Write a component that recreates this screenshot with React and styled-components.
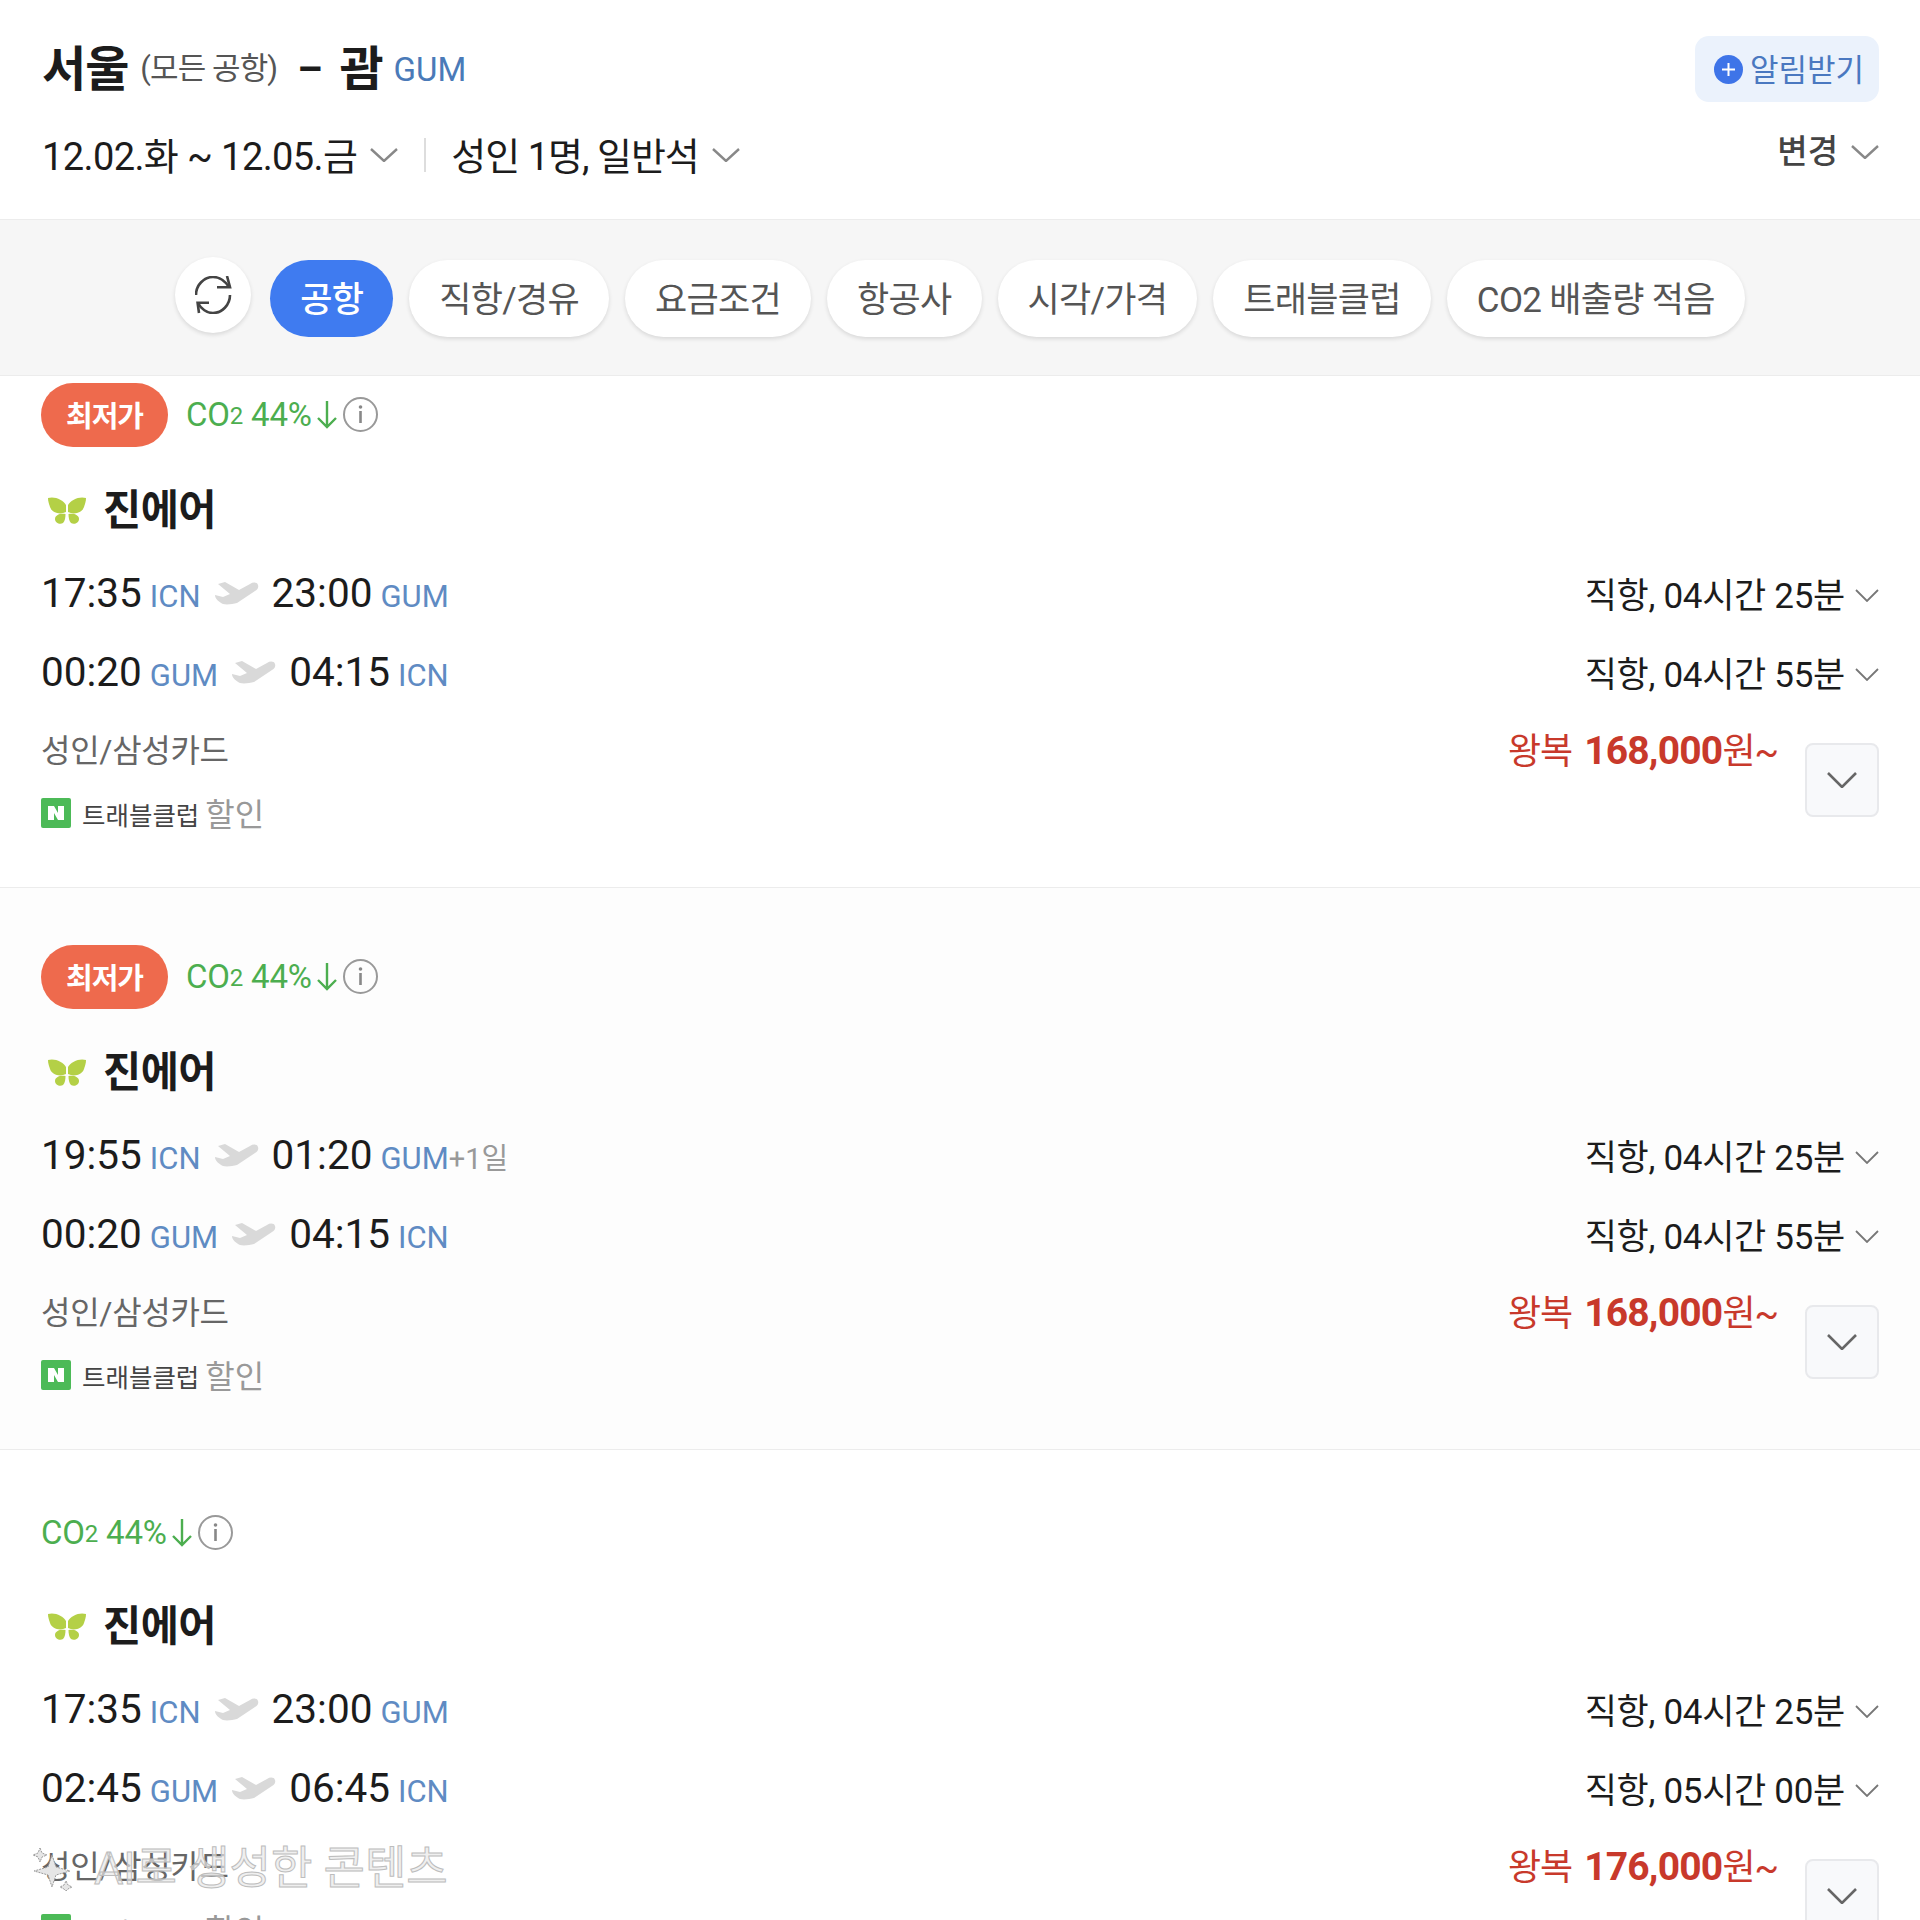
import React from "react";
import styled, { createGlobalStyle } from "styled-components";

const GlobalStyle = createGlobalStyle`
  html, body {
    margin: 0;
    padding: 0;
    background: #fff;
  }
  * {
    box-sizing: border-box;
  }
`;

const Page = styled.div`
  position: relative;
  width: 1920px;
  height: 1920px;
  overflow: hidden;
  background: #fff;
  color: #1c1c1c;
  font-family: Roboto, "Noto Sans CJK KR", sans-serif;
`;

const Header = styled.header`
  height: 220px;
  padding: 36px 41px 0 42px;
  border-bottom: 1px solid #ececec;
  display: flex;
  justify-content: space-between;
`;

const HeaderLeft = styled.div`
  display: flex;
  flex-direction: column;
`;

const RouteLine = styled.div`
  display: flex;
  align-items: center;
  height: 66px;
  padding-top: 2px;
`;

const City = styled.strong`
  font-size: 48px;
  font-weight: 700;
  line-height: 62px;
  letter-spacing: -1px;
`;

const CityNote = styled.span`
  font-size: 31px;
  line-height: 62px;
  color: #555;
  margin-left: 12px;
  padding-bottom: 2px;
  letter-spacing: -0.9px;
`;

const Dash = styled.span`
  font-size: 40px;
  font-weight: 700;
  line-height: 62px;
  margin: 0 17px 0 20px;
`;

const CityCode = styled.span`
  font-size: 33px;
  color: #4a7ab8;
  margin-left: 11px;
  padding-bottom: 2px;
`;

const SummaryLine = styled.div`
  display: flex;
  align-items: center;
  margin-top: 33px;
  height: 40px;
  font-size: 38px;
`;

const SummaryText = styled.span`
  margin-right: 13px;
  padding-bottom: 4px;
  letter-spacing: ${(p) => p.$spacing || -0.6}px;
`;

const Divider = styled.span`
  width: 2px;
  height: 34px;
  margin: 0 25px 0 26px;
  background: #ddd;
`;

const HeaderRight = styled.div`
  display: flex;
  flex-direction: column;
  align-items: flex-end;
`;

const AlertButton = styled.button`
  width: 184px;
  height: 66px;
  padding: 0 0 0 19px;
  display: flex;
  align-items: center;
  gap: 7px;
  border: 0;
  border-radius: 14px;
  background: #ebf2fc;
  color: #4a78c0;
  font: 400 31px Roboto, "Noto Sans CJK KR", sans-serif;
  span {
    padding-bottom: 4px;
  }
`;

const ChangeLink = styled.div`
  display: flex;
  align-items: center;
  gap: 13px;
  margin-top: 30px;
  font-size: 33px;
  font-weight: 500;
  color: #444;
  line-height: 40px;
`;

const FilterBar = styled.nav`
  height: 156px;
  padding-top: 40px;
  display: flex;
  justify-content: center;
  gap: 16px;
  background: #f6f6f6;
  border-bottom: 1px solid #ececec;
`;

const RefreshButton = styled.button`
  width: 76px;
  height: 76px;
  margin: -3px 3px 0 0;
  padding: 0;
  display: flex;
  align-items: center;
  justify-content: center;
  border: 0;
  border-radius: 50%;
  background: #fff;
  box-shadow: 0 2px 4px rgba(0, 0, 0, 0.12);
`;

const Pill = styled.button`
  height: 77px;
  padding: 0 30px 4px;
  border: 0;
  border-radius: 39px;
  background: ${(p) => (p.$active ? "#3f7bf0" : "#fff")};
  color: ${(p) => (p.$active ? "#fff" : "#555")};
  font: ${(p) => (p.$active ? 500 : 400)} 35px Roboto, "Noto Sans CJK KR", sans-serif;
  letter-spacing: -0.7px;
  box-shadow: ${(p) => (p.$active ? "none" : "0 2px 4px rgba(0, 0, 0, 0.12)")};
  white-space: nowrap;
`;

const Card = styled.article`
  height: ${(p) => p.$height}px;
  padding: ${(p) => p.$top}px 41px 0;
  background: ${(p) => p.$bg || "#fff"};
  border-bottom: 1px solid #ececec;
`;

const TagRow = styled.div`
  display: flex;
  align-items: center;
  height: ${(p) => p.$height}px;
`;

const CheapBadge = styled.span`
  width: 127px;
  height: 64px;
  margin-right: 18px;
  padding-bottom: 2px;
  display: flex;
  align-items: center;
  justify-content: center;
  border-radius: 32px;
  background: #ee6a4d;
  color: #fff;
  font-size: 29px;
  font-weight: 700;
  letter-spacing: -1px;
`;

const Co2 = styled.span`
  display: flex;
  align-items: center;
  padding-bottom: 2px;
  font-size: 33px;
  color: #4cae4f;
  letter-spacing: -0.2px;
  sub {
    font-size: 24px;
    line-height: 1;
    vertical-align: baseline;
    position: relative;
    top: 2px;
  }
`;

const ArrowIcon = styled.svg`
  width: 22px;
  height: 32px;
  margin-left: 4px;
`;

const InfoIcon = styled.svg`
  width: 37px;
  height: 37px;
  margin-left: 4px;
`;

const AirlineRow = styled.div`
  display: flex;
  align-items: center;
  gap: 17px;
  height: 60px;
  margin: 30px 0 16px;
  padding-left: 7px;
`;

const ButterflyIcon = styled.svg`
  width: 38px;
  height: 30px;
  margin-top: 8px;
`;

const AirlineName = styled.strong`
  font-size: 41.5px;
  font-weight: 700;
  letter-spacing: -0.5px;
`;

const ItineraryRow = styled.div`
  display: flex;
  justify-content: space-between;
  align-items: center;
  height: 79px;
`;

const Times = styled.div`
  display: flex;
  align-items: baseline;
`;

const Time = styled.span`
  font-size: 40.5px;
`;

const Code = styled.span`
  font-size: 31px;
  color: #5f8bc3;
  margin-left: 8px;
`;

const PlusDay = styled.span`
  font-size: 29px;
  color: #999;
`;

const PlaneIcon = styled.svg`
  width: 46px;
  height: 24px;
  margin: 0 13px 0 12px;
  align-self: center;
`;

const Duration = styled.div`
  display: flex;
  align-items: center;
  gap: 10px;
  font-size: 35px;
  letter-spacing: -0.3px;
  svg {
    margin-top: 6px;
  }
`;

const FareRow = styled.div`
  display: flex;
  justify-content: space-between;
  margin-top: 17px;
`;

const FareLeft = styled.div`
  display: flex;
  flex-direction: column;
`;

const FareType = styled.div`
  font-size: 32px;
  line-height: 40px;
  color: #666;
  margin-top: 3px;
  letter-spacing: -0.3px;
`;

const ClubLine = styled.div`
  display: flex;
  align-items: center;
  margin-top: 24px;
  height: 36px;
`;

const NaverIcon = styled.svg`
  width: 30px;
  height: 30px;
  margin-right: 11px;
`;

const ClubName = styled.span`
  font-size: 25.5px;
  color: #444;
  margin-right: 6px;
`;

const ClubNote = styled.span`
  font-size: 32px;
  color: #999;
  padding-bottom: 3px;
`;

const FareRight = styled.div`
  display: flex;
  align-items: flex-start;
  gap: 27px;
`;

const Price = styled.div`
  font-size: 36px;
  line-height: 44px;
  margin-top: 1px;
  color: #c8392b;
  letter-spacing: -1px;
  b {
    font-size: 39px;
    font-weight: 700;
    margin-left: 12px;
    letter-spacing: -0.8px;
  }
`;

const ExpandButton = styled.button`
  width: 74px;
  height: 74px;
  margin-top: 15px;
  padding: 0;
  display: flex;
  align-items: center;
  justify-content: center;
  border: 2px solid #e8e9ec;
  border-radius: 8px;
  background: #f8f9fb;
`;

const Watermark = styled.div`
  position: absolute;
  left: 32px;
  top: 1845px;
  display: flex;
  align-items: center;
  gap: 20px;
  font-size: 45px;
  line-height: 48px;
  color: rgba(232, 232, 232, 0.7);
  -webkit-text-stroke: 1px #bdbdbd;
`;

const Chevron = ({ w = 28, h = 14, color = "#888", sw = 2.4 }) => (
  <svg width={w} height={h} viewBox={`0 0 ${w} ${h}`} fill="none">
    <path
      d={`M1 1 L${w / 2} ${h - 1} L${w - 1} 1`}
      stroke={color}
      strokeWidth={sw}
    />
  </svg>
);

const Butterfly = () => (
  <ButterflyIcon viewBox="0 0 38 30" fill="#b4d046">
    <path d="M0 2 C7 0 15 4 18 9 L18 16 C12 19 4 17 2 11 C1 8 0 5 0 2 Z" />
    <path d="M38 2 C31 0 23 4 20 9 L20 16 C26 19 34 17 36 11 C37 8 38 5 38 2 Z" />
    <path d="M17.5 18 C12 17 7 19 7 23 C7 27 12 29 15 27 C17 25 17.5 21 17.5 18 Z" />
    <path d="M20.5 18 C26 17 31 19 31 23 C31 27 26 29 23 27 C21 25 20.5 21 20.5 18 Z" />
  </ButterflyIcon>
);

const Plane = () => (
  <PlaneIcon viewBox="0 0 46 24">
    <path
      d="M45 4 C44 1 40 1 37 3 L26 9 L12 1 L5 3 L17 13 L10 16 L2 14 C2 18 6 21 10 23 C14 24 20 23 24 22 L42 10 C44 9 46 7 45 4 Z"
      fill="#d9d9d9"
    />
  </PlaneIcon>
);

const Info = () => (
  <InfoIcon viewBox="0 0 37 37" fill="none">
    <circle cx="18.5" cy="18.5" r="16.5" stroke="#999" strokeWidth="2" />
    <circle cx="18.5" cy="11" r="1.8" fill="#888" />
    <rect x="17.2" y="15" width="2.6" height="12" fill="#888" />
  </InfoIcon>
);

const DownArrow = () => (
  <ArrowIcon viewBox="0 0 22 32" fill="none">
    <path d="M11 3 V29 M2 20 L11 29 L20 20" stroke="#4cae4f" strokeWidth="2.4" />
  </ArrowIcon>
);

const Naver = () => (
  <NaverIcon viewBox="0 0 30 30">
    <rect width="30" height="30" rx="2" fill="#4cba57" />
    <path d="M7 8 H13 L17 15 V8 H23 V22 H17 L13 15 V22 H7 Z" fill="#fff" />
  </NaverIcon>
);

const Sparkles = () => (
  <svg width="42" height="44" viewBox="0 0 42 44" fill="#e6e6e6" stroke="#9a9a9a" strokeWidth="1" strokeDasharray="2 1">
    <path d="M8 1 L10 6 L15 8 L10 10 L8 15 L6 10 L1 8 L6 6 Z" />
    <path d="M20 8 L24 20 L38 24 L24 28 L20 40 L16 28 L2 24 L16 20 Z" />
    <path d="M34 34 L36 38 L40 40 L36 42 L34 44 L32 42 L28 40 L32 38 Z" />
  </svg>
);

const filters = ["직항/경유", "요금조건", "항공사", "시각/가격", "트래블클럽", "CO2 배출량 적음"];

const cards = [
  {
    cheap: true,
    top: 7,
    height: 512,
    legs: [
      { from: "17:35", fromCode: "ICN", to: "23:00", toCode: "GUM", duration: "직항, 04시간 25분" },
      { from: "00:20", fromCode: "GUM", to: "04:15", toCode: "ICN", duration: "직항, 04시간 55분" },
    ],
    price: "168,000",
  },
  {
    cheap: true,
    top: 57,
    height: 562,
    bg: "#fdfdfd",
    legs: [
      { from: "19:55", fromCode: "ICN", to: "01:20", toCode: "GUM", plus: "+1일", duration: "직항, 04시간 25분" },
      { from: "00:20", fromCode: "GUM", to: "04:15", toCode: "ICN", duration: "직항, 04시간 55분" },
    ],
    price: "168,000",
  },
  {
    cheap: false,
    top: 53,
    height: 560,
    legs: [
      { from: "17:35", fromCode: "ICN", to: "23:00", toCode: "GUM", duration: "직항, 04시간 25분" },
      { from: "02:45", fromCode: "GUM", to: "06:45", toCode: "ICN", duration: "직항, 05시간 00분" },
    ],
    price: "176,000",
  },
];

const Leg = ({ leg }) => (
  <ItineraryRow>
    <Times>
      <Time>{leg.from}</Time>
      <Code>{leg.fromCode}</Code>
      <Plane />
      <Time>{leg.to}</Time>
      <Code>{leg.toCode}</Code>
      {leg.plus && <PlusDay>{leg.plus}</PlusDay>}
    </Times>
    <Duration>
      {leg.duration}
      <Chevron w={24} h={13} color="#777" sw={1.8} />
    </Duration>
  </ItineraryRow>
);

const FlightCard = ({ card }) => (
  <Card $top={card.top} $height={card.height} $bg={card.bg}>
    <TagRow $height={card.cheap ? 64 : 60}>
      {card.cheap && <CheapBadge>최저가</CheapBadge>}
      <Co2>
        CO<sub>2</sub>&nbsp;44%
        <DownArrow />
        <Info />
      </Co2>
    </TagRow>
    <AirlineRow>
      <Butterfly />
      <AirlineName>진에어</AirlineName>
    </AirlineRow>
    {card.legs.map((leg) => (
      <Leg key={leg.from} leg={leg} />
    ))}
    <FareRow>
      <FareLeft>
        <FareType>성인/삼성카드</FareType>
        <ClubLine>
          <Naver />
          <ClubName>트래블클럽</ClubName>
          <ClubNote>할인</ClubNote>
        </ClubLine>
      </FareLeft>
      <FareRight>
        <Price>
          왕복<b>{card.price}</b>원~
        </Price>
        <ExpandButton aria-label="펼치기">
          <Chevron w={30} h={16} color="#666" sw={2.6} />
        </ExpandButton>
      </FareRight>
    </FareRow>
  </Card>
);

export default function App() {
  return (
    <Page>
      <GlobalStyle />
      <Header>
        <HeaderLeft>
          <RouteLine>
            <City>서울</City>
            <CityNote>(모든 공항)</CityNote>
            <Dash>–</Dash>
            <City>괌</City>
            <CityCode>GUM</CityCode>
          </RouteLine>
          <SummaryLine>
            <SummaryText>12.02.화 ~ 12.05.금</SummaryText>
            <Chevron />
            <Divider />
            <SummaryText $spacing={-1}>성인 1명, 일반석</SummaryText>
            <Chevron />
          </SummaryLine>
        </HeaderLeft>
        <HeaderRight>
          <AlertButton>
            <svg width="29" height="29" viewBox="0 0 29 29">
              <circle cx="14.5" cy="14.5" r="14.5" fill="#3e74e8" />
              <path d="M14.5 8 V21 M8 14.5 H21" stroke="#fff" strokeWidth="2" />
            </svg>
            <span>알림받기</span>
          </AlertButton>
          <ChangeLink>
            변경
            <Chevron />
          </ChangeLink>
        </HeaderRight>
      </Header>
      <FilterBar>
        <RefreshButton aria-label="초기화">
          <svg width="37" height="38" viewBox="0 0 37 38" fill="none" stroke="#444" strokeWidth="2.6">
            <path d="M1 19 C1 9 9 1 18 1 C24 1 30 5 34 11" />
            <path d="M32 0 L35 11.3 L22 11.3" />
            <path d="M35 19 C35 29 27 37 18 37 C12 37 6 33 3 27" />
            <path d="M4 37 L2.6 26.7 L14 26.7" />
          </svg>
        </RefreshButton>
        <Pill $active>공항</Pill>
        {filters.map((label) => (
          <Pill key={label}>{label}</Pill>
        ))}
      </FilterBar>
      {cards.map((card, i) => (
        <FlightCard key={i} card={card} />
      ))}
      <Watermark>
        <Sparkles />
        AI로 생성한 콘텐츠
      </Watermark>
    </Page>
  );
}
